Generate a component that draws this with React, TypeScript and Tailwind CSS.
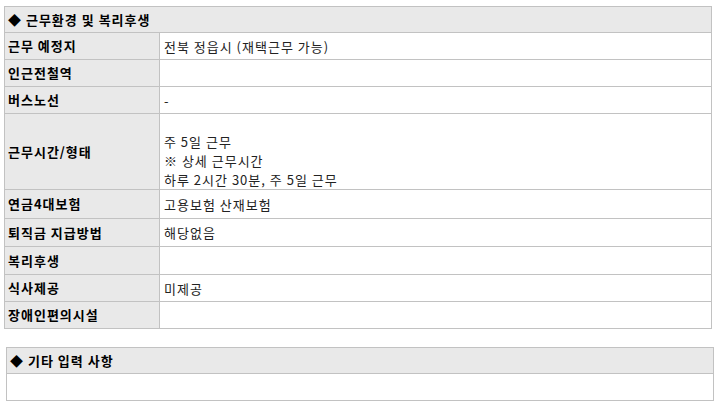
const font = { fontFamily: '"Malgun Gothic", "Noto Sans CJK KR", "Noto Sans", sans-serif' };

type Row = { label: string; value?: string[]; h: string };

const rows: Row[] = [
  { label: '근무 예정지', value: ['전북 정읍시 (재택근무 가능)'], h: 'h-[26px]' },
  { label: '인근전철역', h: 'h-[26px]' },
  { label: '버스노선', value: ['-'], h: 'h-[26px]' },
  { label: '근무시간/형태', value: ['', '주 5일 근무', '※ 상세 근무시간', '하루 2시간 30분, 주 5일 근무'], h: 'h-[75px]' },
  { label: '연금4대보험', value: ['고용보험 산재보험'], h: 'h-[28px]' },
  { label: '퇴직금 지급방법', value: ['해당없음'], h: 'h-[27px]' },
  { label: '복리후생', h: 'h-[27px]' },
  { label: '식사제공', value: ['미제공'], h: 'h-[26px]' },
  { label: '장애인편의시설', h: 'h-[26px]' },
];

const App = () => {
  return (
    <div className="w-[721px] h-[410px] bg-white text-[13px] tracking-[1px] text-black" style={font}>
      <div className="pt-[6px] pl-[4px]">
        <div className="w-[708px] border border-[#c2c2c2]">
          <div className="h-[26px] bg-[#e9e9e9] border-b border-[#c2c2c2] flex items-center px-[3px] font-bold">
            ◆ 근무환경 및 복리후생
          </div>
          {rows.map((r, i) => (
            <div key={r.label} className={`flex ${i < rows.length - 1 ? 'border-b border-[#c2c2c2]' : ''}`}>
              <div className={`${r.h} w-[155px] shrink-0 bg-[#e9e9e9] border-r border-[#c2c2c2] flex items-center px-[3px] font-bold`}>
                {r.label}
              </div>
              <div className={`${r.h} flex-1 flex flex-col justify-center px-[4px] text-[#222] leading-[19px]`}>
                {r.value?.map((v, j) => (
                  <div key={j} className="h-[19px]">{v}</div>
                ))}
              </div>
            </div>
          ))}
        </div>
      </div>

      <div className="pt-[18px] pl-[6px]">
        <div className="w-[708px] border border-[#c2c2c2]">
          <div className="h-[26px] bg-[#e9e9e9] border-b border-[#c2c2c2] flex items-center px-[3px] font-bold">
            ◆ 기타 입력 사항
          </div>
          <div className="h-[26px]"></div>
        </div>
      </div>
    </div>
  );
};

export default App;
